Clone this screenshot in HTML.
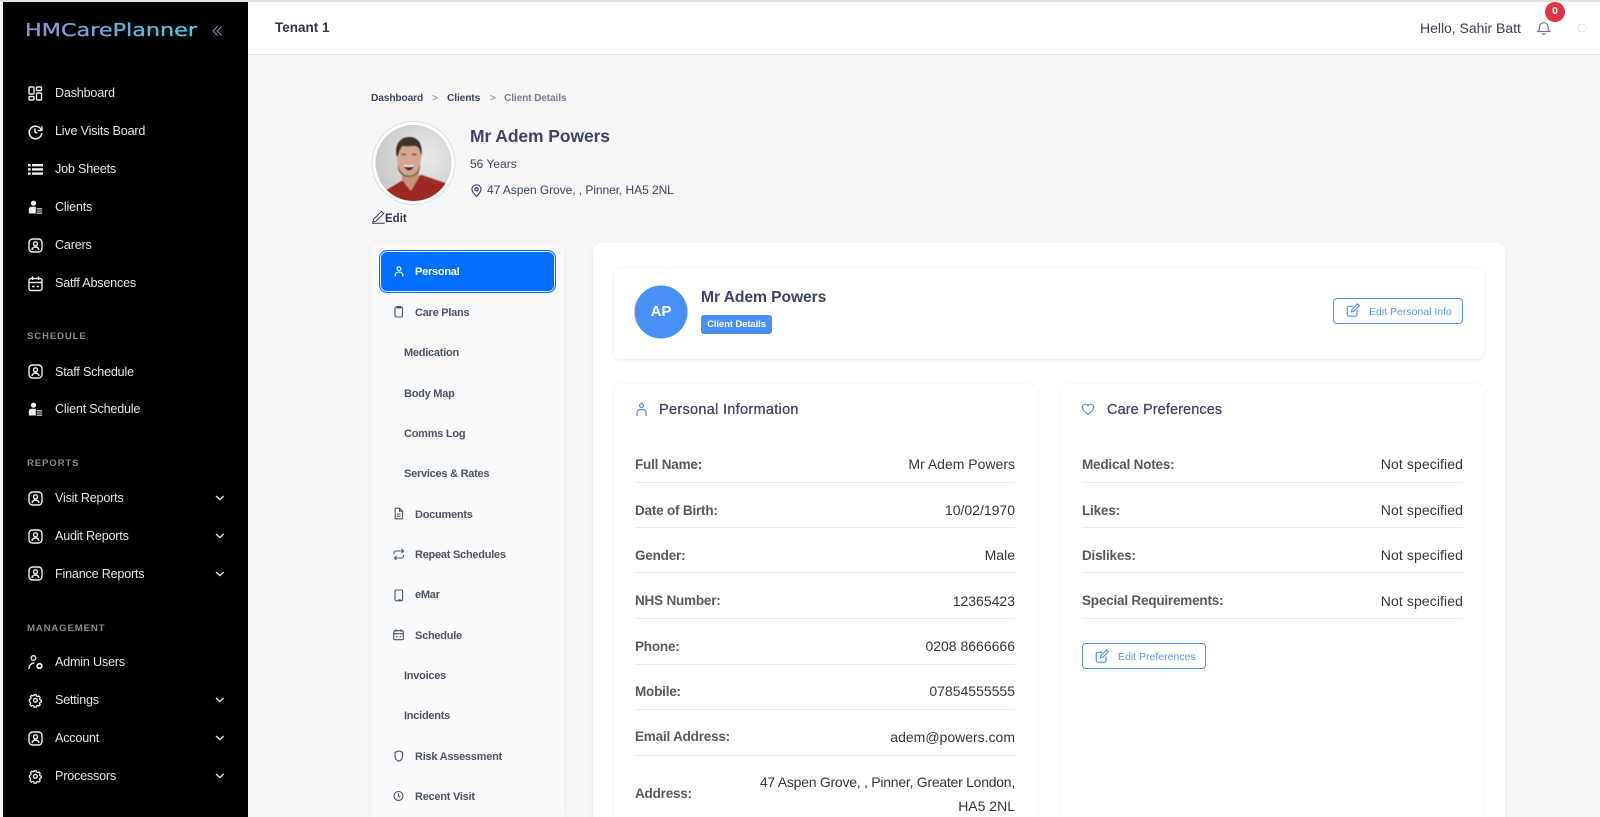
<!DOCTYPE html>
<html lang="en"><head><meta charset="utf-8"><title>Client Details</title>
<style>
*{box-sizing:border-box;margin:0;padding:0}
html,body{width:1600px;height:817px;overflow:hidden;background:#f7f7f8;font-family:"Liberation Sans",Arial,sans-serif}
#r{position:relative;width:1600px;height:817px;overflow:hidden;filter:blur(.25px)}
.a{position:absolute}
.t{position:absolute;white-space:nowrap;line-height:20px;height:20px}
.side{position:absolute;left:3px;top:2px;width:245px;height:815px;background:#000}
.n{color:#e4e4e4;font-size:12.6px;letter-spacing:-.2px;left:55px}
.h{color:#8a8a8a;font-size:9.6px;font-weight:bold;letter-spacing:.85px;left:27px}
.m{color:#4b5563;font-size:11px;font-weight:bold;letter-spacing:-.25px}
.l{color:#555a60;font-size:13.5px;font-weight:bold;letter-spacing:-.2px}
.v{color:#33373c;font-size:14px;text-align:right}
.card{position:absolute;background:#fff;border-radius:8px}
.line{position:absolute;height:1px;background:#e9ebee}
.btn{position:absolute;border:1px solid #4f93f0;border-radius:4px;background:#fff}
svg{position:absolute;left:0;top:0;overflow:visible}
</style></head><body><div id="r">
<div class="a" style="left:0;top:0;width:1600px;height:2px;background:#dfe0e2"></div>
<div class="a" style="left:248px;top:2px;width:1352px;height:53px;background:#fff;border-bottom:1px solid #e6e7e9"></div>
<div class="side"></div>

<!-- main panels -->
<div class="a" style="left:371px;top:243px;width:193px;height:574px;background:#f8fafc;border-radius:8px 8px 0 0;box-shadow:0 0 6px rgba(0,0,0,.04)"></div>
<div class="card" style="left:593px;top:243px;width:912px;height:590px;box-shadow:0 1px 6px rgba(0,0,0,.05)"></div>
<div class="card" style="left:614px;top:268px;width:870px;height:91px;box-shadow:0 1px 5px rgba(0,0,0,.09)"></div>
<div class="card" style="left:614px;top:384px;width:423px;height:450px;box-shadow:0 0 4px rgba(0,0,0,.06)"></div>
<div class="card" style="left:1061px;top:384px;width:423px;height:450px;box-shadow:0 0 4px rgba(0,0,0,.06)"></div>
<div class="a" style="left:379px;top:250px;width:177px;height:43px;background:#006fff;border:1.5px solid #006fff;border-radius:8px;box-shadow:inset 0 0 0 1px #dcebff"></div>

<svg width="1600" height="817" style="z-index:2">
<defs>
<linearGradient id="lg" x1="0" x2="1" y1="0" y2="0"><stop offset="0" stop-color="#8d8fd8"/><stop offset=".45" stop-color="#6fa8d8"/><stop offset="1" stop-color="#46cfe0"/></linearGradient>
<filter id="soft"><feGaussianBlur stdDeviation=".55"/></filter>
<g id="i-user-box" fill="none" stroke="#eee" stroke-width="1.4"><rect x="1" y="1" width="13" height="13" rx="3.5"/><circle cx="7.5" cy="5.8" r="2"/><path d="M4 12c.4-2 1.8-3 3.5-3s3.1 1 3.5 3"/></g>
<g id="i-client"><circle cx="5.5" cy="3.200" r="2.600" fill="#eee"/><path d="M.8 13.500V9.200C.8 7.700 2.200 6.800 4 6.800h3.800v6.700z" fill="#eee"/><path d="M8.600 8.800h5.600M8.600 11h5.600M8.600 13.200h5.600" stroke="#eee" stroke-width="1.100"/></g>
<g id="i-gear" fill="none" stroke="#eee" stroke-width="1.700" transform="translate(1.200 1.200) scale(.82)"><path d="M6.200 1h2.600l.4 1.800 1.500.7 1.600-.9 1.800 1.900-.9 1.500.6 1.500 1.700.5v2.500l-1.700.5-.6 1.500.9 1.600-1.800 1.800-1.600-.9-1.500.6-.4 1.800H6.200l-.5-1.800-1.500-.6-1.500.9-1.900-1.800.9-1.600-.6-1.500L0 9.500V7l1.600-.5.6-1.500-.9-1.500 1.900-1.900 1.500.9 1.500-.7z" transform="scale(.93) translate(.3 -.3)"/><circle cx="7.500" cy="7.500" r="2.300"/></g>
<path id="i-chev" d="M0 0l3.800 3.600L7.600 0" fill="none" stroke="#eee" stroke-width="1.300"/>
<g id="i-edit" fill="none" stroke="#4f93f0" stroke-width="1.200"><path d="M11 7.500v4.200a1.500 1.500 0 0 1-1.500 1.500H2.800a1.500 1.500 0 0 1-1.500-1.500V4.800a1.500 1.500 0 0 1 1.500-1.500H7"/><path d="M5.500 8.800l.5-2.300L11.500 1l1.800 1.800-5.500 5.500z"/></g>
</defs>

<text x="25" y="36" font-family="DejaVu Sans" font-size="18" fill="url(#lg)" stroke="url(#lg)" stroke-width=".3" textLength="172" lengthAdjust="spacingAndGlyphs">HMCarePlanner</text>
<path d="M220.500 26.500l-4.500 4.500 4.500 4.500M224.500 26.500l-4.500 4.500 4.500 4.500" fill="none" stroke="#8b90b8" stroke-width="1.100" transform="translate(-3 0)"/>

<!-- Dashboard -->
<g fill="none" stroke="#eee" stroke-width="1.400" transform="translate(28 86)"><rect x="1" y="1" width="5" height="7" rx="1"/><rect x="1" y="10.500" width="5" height="3.500" rx="1"/><rect x="8.500" y="1" width="5" height="3.500" rx="1"/><rect x="8.500" y="7" width="5" height="7" rx="1"/></g>
<!-- Live -->
<g fill="none" stroke="#eee" stroke-width="1.500" transform="translate(28 124)"><path d="M13.500 6.500A6.300 6.300 0 1 0 13.800 9"/><path d="M7 4.500V8l2.200 1.400"/><path d="M14 2v4.500H9.800" stroke-width="1.300"/></g>
<!-- Job sheets -->
<g fill="#eee" transform="translate(28 163)"><rect x="0" y="1" width="2.600" height="2.400"/><rect x="0" y="5.200" width="2.600" height="2.400"/><rect x="0" y="9.400" width="2.600" height="2.400"/><rect x="4" y="1" width="11" height="2.400"/><rect x="4" y="5.200" width="11" height="2.400"/><rect x="4" y="9.400" width="11" height="2.400"/></g>
<use href="#i-client" x="28" y="200"/>
<use href="#i-user-box" x="28" y="238"/>
<!-- Calendar -->
<g fill="none" stroke="#eee" stroke-width="1.400" transform="translate(28 276)"><rect x="1" y="2.500" width="13" height="12" rx="2"/><path d="M1 6.500h13M4.500 .5v3.500M10.500 .5v3.500M4 10.500h2.500M8.500 10.500h2.500"/></g>

<use href="#i-user-box" x="28" y="364"/>
<use href="#i-client" x="28" y="402"/>
<use href="#i-user-box" x="28" y="491"/>
<use href="#i-user-box" x="28" y="529"/>
<use href="#i-user-box" x="28" y="566"/>
<!-- Admin users -->
<g fill="none" stroke="#eee" stroke-width="1.400" transform="translate(28 655)"><circle cx="5.500" cy="3" r="2.300"/><path d="M1 14c0-3.500 2-6 5.500-6"/><circle cx="11.500" cy="11" r="2.300" stroke-width="1.800"/></g>
<use href="#i-gear" x="28" y="693"/>
<use href="#i-user-box" x="28" y="731"/>
<use href="#i-gear" x="28" y="769"/>
<use href="#i-chev" x="216" y="496"/>
<use href="#i-chev" x="216" y="534"/>
<use href="#i-chev" x="216" y="572"/>
<use href="#i-chev" x="216" y="698"/>
<use href="#i-chev" x="216" y="736"/>
<use href="#i-chev" x="216" y="774"/>

<!-- bell -->
<g fill="none" stroke="#6d7392" stroke-width="1.200" transform="translate(1537 20)"><path d="M1 11.500c1.200-1 1.500-2 1.500-4.500a4.300 4.300 0 0 1 8.600 0c0 2.500.3 3.500 1.500 4.500z"/><path d="M5.300 13.200a1.600 1.600 0 0 0 3 0"/></g>
<circle cx="1555" cy="12" r="10" fill="#dc3545"/>
<circle cx="1582" cy="28" r="4" fill="#fff" stroke="#dfe1e4" stroke-width="1"/>

<!-- avatar -->
<circle cx="413.500" cy="163" r="41.500" fill="#fff" stroke="#dcdde0" stroke-width="1"/>
<clipPath id="cp"><circle cx="413.500" cy="163" r="38"/></clipPath>
<radialGradient id="bgp" cx=".65" cy=".4" r=".7"><stop offset="0" stop-color="#e8e9e9"/><stop offset="1" stop-color="#c5c8c9"/></radialGradient>
<g clip-path="url(#cp)">
<rect x="375" y="125" width="78" height="78" fill="url(#bgp)"/>
<g filter="url(#soft)">
<path d="M383 204l2-13 18-11 19-5 23 8 8 21z" fill="#9c2a20"/>
<path d="M402 170h17v7l-8 14-9-11z" fill="#c79478"/>
<path d="M396.500 152c0-9 5-13 12.500-13s12.500 4 12.500 13c0 13-5 25-12.500 25s-12.500-12-12.500-25z" fill="#d2a78c"/>
<path d="M396.500 156c-2-12 4-19 12.500-19s14 6 12.500 19l-2-6c-1-3-3-4-6-4-4 .5-8 .5-11 0-2 2-3 5-4.500 10z" fill="#3a302a"/>
<path d="M398 164c1.500 7 5 11.500 11 11.500s9.500-4.500 11-11.500c1 8-4 13-11 13s-12-5-11-13z" fill="#7d6252"/>
<path d="M404 164.500q5 1.500 10 0q-.8 6-5 6t-5-6z" fill="#4a2a26"/>
<path d="M404 164.500q5 1.500 10 0l-.4 2q-4.600 1-9.200 0z" fill="#f4efec"/>
<path d="M401.500 154.500h4.500M412 154.500h4.500" stroke="#4a372c" stroke-width="1.300"/>
</g>
</g>
<!-- pencil edit -->
<g fill="none" stroke="#3a3f55" stroke-width="1" transform="translate(372 210)"><path d="M1 12l.8-3L9.500 1.300l2.200 2.200L4 11.200zM0 13.300h12.500"/></g>
<!-- pin -->
<g fill="none" stroke="#3d4466" stroke-width="1.200" transform="translate(471 184)"><path d="M5.500 12.500C3 10 1 7.800 1 5.300a4.500 4.500 0 0 1 9 0c0 2.500-2 4.700-4.500 7.200z"/><circle cx="5.500" cy="5.300" r="1.700"/></g>

<!-- side nav icons -->
<g fill="none" stroke="#fff" stroke-width="1.100" transform="translate(394 266)"><circle cx="5" cy="2.700" r="1.900"/><path d="M1 10.500c0-3 1.500-4.500 4-4.500s4 1.500 4 4.500"/></g>
<g fill="none" stroke="#4b5563" stroke-width="1.100">
<g transform="translate(394 305)"><rect x="1" y="2" width="7.500" height="10" rx="1.500"/><path d="M3 1.500h3.500v1.500H3z"/></g>
<g transform="translate(394 507)"><path d="M1.200 1.200h4.300l3 3v7.600H1.200zM5.500 1.200v3h3M3 7h3.500M3 9.300h3.500"/></g>
<g transform="translate(393 548)"><path d="M1 6V5c0-1.300 1-2 2-2h7.500M8.500 1l2 2-2 2M10.500 7v1c0 1.300-1 2-2 2H1.500M3.500 8l-2 2 2 2"/></g>
<g transform="translate(394 589)"><rect x="1" y="1" width="7.600" height="10.800" rx="1.400"/><path d="M4 11h3"/></g>
<g transform="translate(393 629)"><rect x=".7" y="1.700" width="9.600" height="9" rx="1.500"/><path d="M.7 4.700h9.600M3 .3v2.500M8 .3v2.500M3 7.700h1.500M6.500 7.700H8"/></g>
<g transform="translate(394 750)"><path d="M4.800 1l3.800 1.300v4c0 2.500-1.800 4.200-3.800 5-2-.8-3.800-2.500-3.800-5v-4z"/></g>
<g transform="translate(393 790)"><circle cx="5.500" cy="6" r="4.500"/><path d="M5.500 3.300V6l1.800 1.200"/></g>
</g>

<circle cx="661" cy="312" r="26.500" fill="#4a8ff5"/>
<!-- section icons -->
<g fill="none" stroke="#4a8ff5" stroke-width="1.200" transform="translate(636 403)"><circle cx="5.500" cy="2.500" r="2"/><path d="M1 13V9.500c0-1.800 1.500-3 4.500-3s4.500 1.200 4.500 3V13"/></g>
<path d="M1088 415.500c-3-2.500-5.600-4.500-5.600-7.200 0-2 1.500-3 3-3 1.200 0 2 .5 2.600 1.500.6-1 1.400-1.500 2.600-1.500 1.500 0 3 1 3 3 0 2.700-2.600 4.700-5.600 7.200z" fill="none" stroke="#4a8ff5" stroke-width="1.200" transform="translate(0 -1)"/>
</svg>

<div style="position:relative;z-index:3">
<div class="t n" style="top:83px">Dashboard</div>
<div class="t n" style="top:121px">Live Visits Board</div>
<div class="t n" style="top:159px">Job Sheets</div>
<div class="t n" style="top:197px">Clients</div>
<div class="t n" style="top:235px">Carers</div>
<div class="t n" style="top:273px">Satff Absences</div>
<div class="t h" style="top:327px">SCHEDULE</div>
<div class="t n" style="top:361.500px">Staff Schedule</div>
<div class="t n" style="top:399px">Client Schedule</div>
<div class="t h" style="top:454px">REPORTS</div>
<div class="t n" style="top:488px">Visit Reports</div>
<div class="t n" style="top:526px">Audit Reports</div>
<div class="t n" style="top:563.500px">Finance Reports</div>
<div class="t h" style="top:619px">MANAGEMENT</div>
<div class="t n" style="top:652px">Admin Users</div>
<div class="t n" style="top:690px">Settings</div>
<div class="t n" style="top:728px">Account</div>
<div class="t n" style="top:766px">Processors</div>

<div class="t" style="left:275px;top:18px;font-size:13.500px;font-weight:bold;color:#2f3550">Tenant 1</div>
<div class="t" style="left:1420px;top:18px;font-size:14px;letter-spacing:-.02px;color:#3a3f55">Hello, Sahir Batt</div>
<div class="t" style="left:1545px;top:2px;width:20px;text-align:center;font-size:10px;font-weight:bold;color:#fff">0</div>

<div class="t" style="left:371px;top:89px;font-size:10.200px;font-weight:bold;letter-spacing:-.12px;color:#3d4466">Dashboard</div>
<div class="t" style="left:432px;top:89px;font-size:10px;color:#7a7f98">&gt;</div>
<div class="t" style="left:447px;top:89px;font-size:10.200px;font-weight:bold;letter-spacing:-.12px;color:#3d4466">Clients</div>
<div class="t" style="left:490px;top:89px;font-size:10px;color:#7a7f98">&gt;</div>
<div class="t" style="left:504px;top:89px;font-size:10.200px;color:#7a7f98;font-weight:bold;letter-spacing:-.15px">Client Details</div>

<div class="t" style="left:470px;top:126px;font-size:17.500px;font-weight:bold;letter-spacing:-.1px;color:#3d4466">Mr Adem Powers</div>
<div class="t" style="left:470px;top:154px;font-size:12px;color:#3d4466">56 Years</div>
<div class="t" style="left:487px;top:180px;font-size:12px;letter-spacing:-.06px;color:#3d4466">47 Aspen Grove, , Pinner, HA5 2NL</div>
<div class="t" style="left:385px;top:208.500px;font-size:11.500px;font-weight:bold;color:#2f3550">Edit</div>

<div class="t m" style="left:415px;top:262px;color:#fff">Personal</div>
<div class="t m" style="left:415px;top:302.500px">Care Plans</div>
<div class="t m" style="left:404px;top:343px">Medication</div>
<div class="t m" style="left:404px;top:383.500px">Body Map</div>
<div class="t m" style="left:404px;top:424px">Comms Log</div>
<div class="t m" style="left:404px;top:464px">Services &amp; Rates</div>
<div class="t m" style="left:415px;top:504.500px">Documents</div>
<div class="t m" style="left:415px;top:545px">Repeat Schedules</div>
<div class="t m" style="left:415px;top:585px">eMar</div>
<div class="t m" style="left:415px;top:625.500px">Schedule</div>
<div class="t m" style="left:404px;top:666px">Invoices</div>
<div class="t m" style="left:404px;top:706px">Incidents</div>
<div class="t m" style="left:415px;top:746.500px">Risk Assessment</div>
<div class="t m" style="left:415px;top:787px">Recent Visit</div>

<div class="t" style="left:641px;top:302px;width:40px;text-align:center;font-size:15px;font-weight:bold;color:#fff">AP</div>
<div class="t" style="left:701px;top:288px;font-size:15.700px;font-weight:bold;letter-spacing:-.1px;color:#3d4466">Mr Adem Powers</div>
<div class="a" style="left:701px;top:315px;width:71px;height:19px;background:#4a8ff5;border-radius:3px"></div>
<div class="t" style="left:701px;top:315px;width:71px;text-align:center;font-size:9.500px;font-weight:bold;letter-spacing:-.1px;color:#fff">Client Details</div>

<div class="btn" style="left:1333px;top:298px;width:130px;height:26px"></div>
<div class="t" style="left:1369px;top:301.500px;font-size:10.500px;color:#5c97ee">Edit Personal Info</div>
<div class="btn" style="left:1082px;top:643px;width:124px;height:26px"></div>
<div class="t" style="left:1118px;top:647px;font-size:10.500px;color:#5c97ee">Edit Preferences</div>
<svg width="1600" height="817" style="z-index:4">
<use href="#i-edit" x="1346" y="303"/>
<use href="#i-edit" x="1095" y="649"/>
</svg>

<div class="t" style="left:659px;top:400px;font-size:14.500px;letter-spacing:.3px;color:#3d4466;-webkit-text-stroke:.25px #3d4466">Personal Information</div>
<div class="t" style="left:1107px;top:400px;font-size:14.500px;letter-spacing:.1px;color:#3d4466;-webkit-text-stroke:.25px #3d4466">Care Preferences</div>

<div class="t l" style="left:635px;top:455px">Full Name:</div><div class="t v" style="left:715px;width:300px;top:454px">Mr Adem Powers</div>
<div class="line" style="left:635px;top:482px;width:380px"></div>
<div class="t l" style="left:635px;top:501px">Date of Birth:</div><div class="t v" style="left:715px;width:300px;top:500px">10/02/1970</div>
<div class="line" style="left:635px;top:527px;width:380px"></div>
<div class="t l" style="left:635px;top:546px">Gender:</div><div class="t v" style="left:715px;width:300px;top:545px">Male</div>
<div class="line" style="left:635px;top:572px;width:380px"></div>
<div class="t l" style="left:635px;top:591px">NHS Number:</div><div class="t v" style="left:715px;width:300px;top:591px">12365423</div>
<div class="line" style="left:635px;top:618px;width:380px"></div>
<div class="t l" style="left:635px;top:637px">Phone:</div><div class="t v" style="left:715px;width:300px;top:636px">0208 8666666</div>
<div class="line" style="left:635px;top:664px;width:380px"></div>
<div class="t l" style="left:635px;top:681.500px">Mobile:</div><div class="t v" style="left:715px;width:300px;top:681px">07854555555</div>
<div class="line" style="left:635px;top:709px;width:380px"></div>
<div class="t l" style="left:635px;top:727px">Email Address:</div><div class="t v" style="left:715px;width:300px;top:727px">adem@powers.com</div>
<div class="line" style="left:635px;top:755px;width:380px"></div>
<div class="t l" style="left:635px;top:784px">Address:</div>
<div class="t v" style="left:715px;width:300px;top:772px;letter-spacing:-.25px">47 Aspen Grove, , Pinner, Greater London,</div>
<div class="t v" style="left:715px;width:300px;top:796px">HA5 2NL</div>

<div class="t l" style="left:1082px;top:455px">Medical Notes:</div><div class="t v" style="left:1263px;width:200px;top:454px;letter-spacing:.1px">Not specified</div>
<div class="line" style="left:1082px;top:482px;width:381px"></div>
<div class="t l" style="left:1082px;top:501px">Likes:</div><div class="t v" style="left:1263px;width:200px;top:500px;letter-spacing:.1px">Not specified</div>
<div class="line" style="left:1082px;top:527px;width:381px"></div>
<div class="t l" style="left:1082px;top:546px">Dislikes:</div><div class="t v" style="left:1263px;width:200px;top:545px;letter-spacing:.1px">Not specified</div>
<div class="line" style="left:1082px;top:572px;width:381px"></div>
<div class="t l" style="left:1082px;top:591px">Special Requirements:</div><div class="t v" style="left:1263px;width:200px;top:591px;letter-spacing:.1px">Not specified</div>
<div class="line" style="left:1082px;top:618px;width:381px"></div>
</div>
</div></body></html>
